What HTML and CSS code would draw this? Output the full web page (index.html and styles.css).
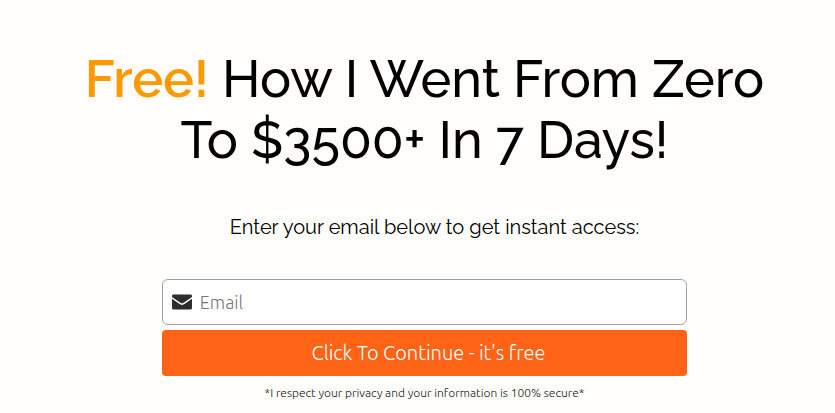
FILE: index.html
```
<!DOCTYPE html>
<html lang="en">
<head>
<meta charset="UTF-8">
<meta name="viewport" content="width=device-width, initial-scale=1.0">
<title>Free! How I Went From Zero To $3500+ In 7 Days!</title>
<link rel="stylesheet" href="styles.css">
</head>
<body>
<div class="optin">
    <h1 class="headline"><span class="free">Free!</span> How I Went From Zero<br>To $3500+ In 7 Days!</h1>
    <p class="subhead">Enter your email below to get instant access:</p>
    <form class="optin-form">
        <label class="email-box">
            <svg class="mail-icon" viewBox="0 0 20 16" aria-hidden="true">
                <path d="M1.5 0.5h17c.8 0 1.500.6 1.500 1.400 0 .9-.6 1.700-1.400 2.200L12 8.600c-.7.5-1.300.8-2 .8s-1.300-.3-2-.8L1.400 4.100C.6 3.600 0 2.800 0 1.900 0 1.100.7.5 1.500.5z"/>
                <path d="M0 4.800l7.200 5c1 .7 1.900 1.100 2.800 1.100s1.800-.4 2.800-1.100l7.200-5v9.200c0 .9-.7 1.500-1.500 1.500h-17C.7 15.500 0 14.900 0 14z"/>
            </svg>
            <input type="email" class="email" placeholder="Email" aria-label="Email">
        </label>
        <button type="submit" class="submit">Click To Continue - it's free</button>
    </form>
    <p class="privacy">*I respect your privacy and your information is 100% secure*</p>
</div>
</body>
</html>
```
FILE: styles.css
```
* { margin: 0; padding: 0; box-sizing: border-box; }
body { background: #fffefc; color: #000; font-family: Raleway, Lato, sans-serif; }

.optin { padding: 48px 0 0 14px; text-align: center; }
.headline { font-size: 52px; line-height: 61px; font-weight: 500; }
.free { color: #ff9900; font-weight: 600; }
.subhead { margin-top: 44px; padding-left: 20px; font-size: 20px; line-height: 26px; }

.optin-form { width: 64%; margin: 39px auto 0; display: flex; flex-direction: column; gap: 5px; font-family: Ubuntu, "Noto Sans", sans-serif; }
.email-box { display: flex; align-items: center; gap: 8px; height: 46px; padding: 0 9px; background: #fff; border: 1px solid #a0a0a0; border-radius: 6px; }
.mail-icon { width: 20px; height: 16px; fill: #2d2d2d; }
.email { flex: 1; min-width: 0; border: 0; outline: 0; background: none; font-family: inherit; font-size: 18px; font-weight: 300; }
.email::placeholder { color: #777; }
.submit { height: 46px; padding: 0 0 2px 8px; border: 0; border-radius: 4px; background: #ff6316; color: #fff; font-family: inherit; font-size: 20px; font-weight: 300; cursor: pointer; }

.privacy { margin-top: 9px; font-family: Ubuntu, "Noto Sans", sans-serif; font-size: 12px; line-height: 16px; font-weight: 300; color: #111; }
```
